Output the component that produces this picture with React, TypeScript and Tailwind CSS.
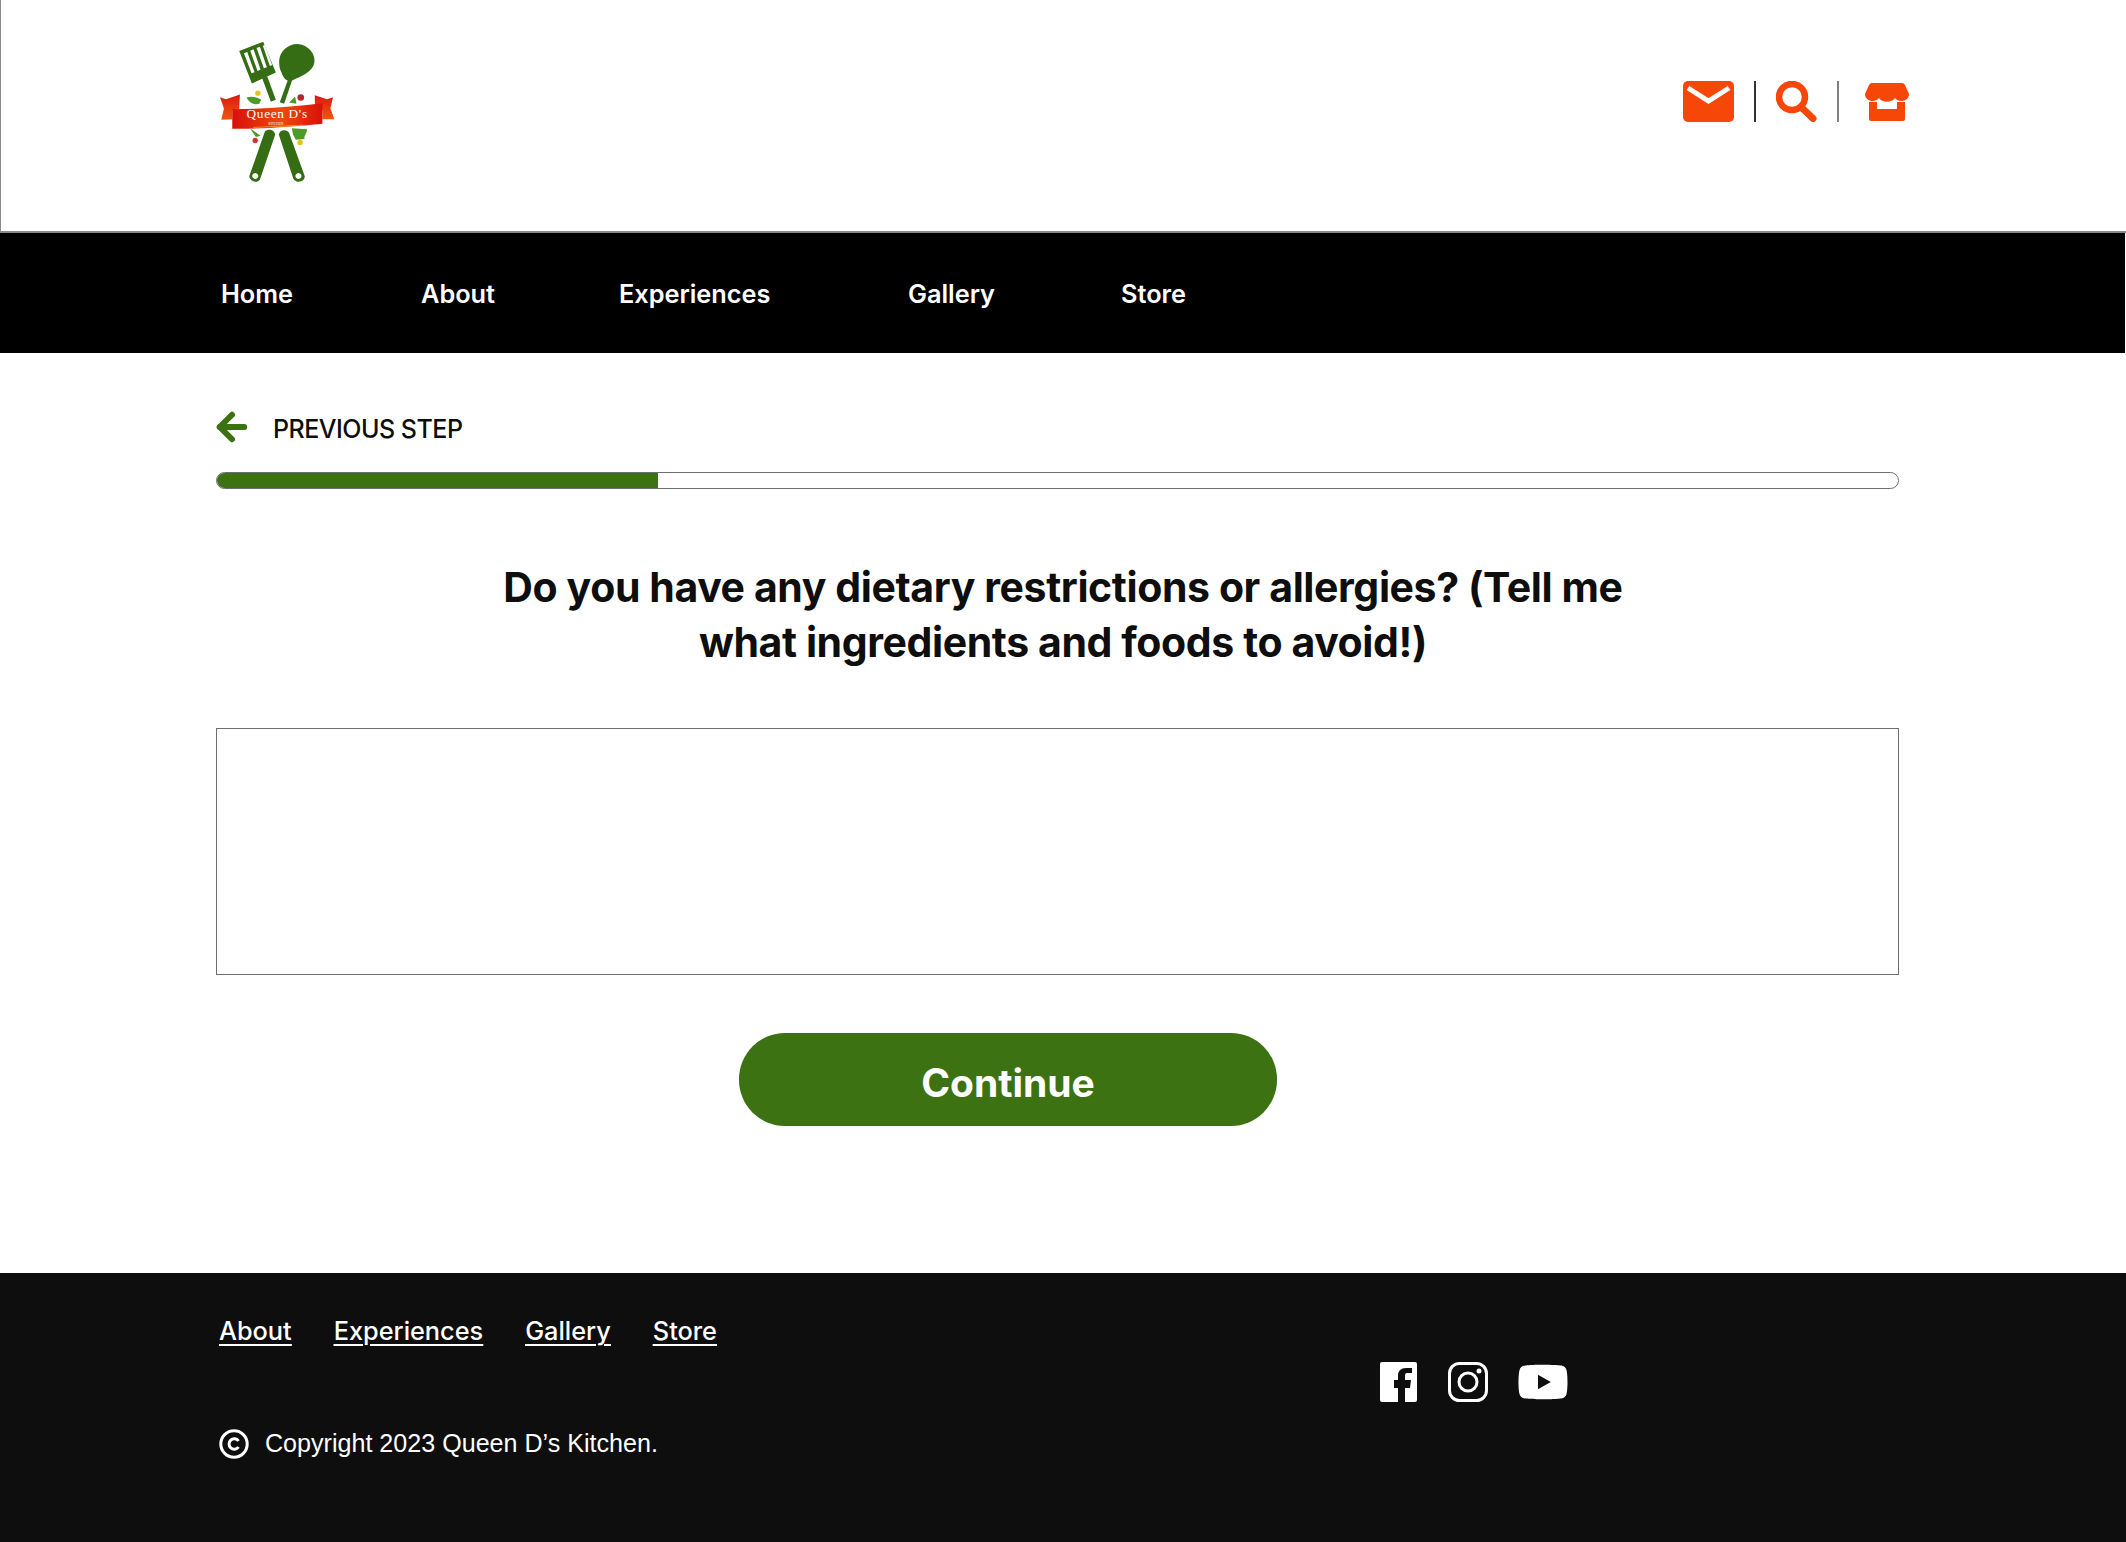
import React from 'react'
import { ArrowLeft } from 'lucide-react'
import { FaYoutube } from 'react-icons/fa6'

const navLinks = [
    { label: 'Home', width: 'w-[200px]' },
    { label: 'About', width: 'w-[198px]' },
    { label: 'Experiences', width: 'w-[289px]' },
    { label: 'Gallery', width: 'w-[213px]' },
    { label: 'Store', width: 'w-[100px]' },
]

const footerLinks = ['About', 'Experiences', 'Gallery', 'Store']

const Logo = () => (
    <svg viewBox="85 60 350 430" className="h-[143px] w-[117px]">
        <defs>
            <linearGradient id="banner" x1="0" x2="1" y1="0" y2="0">
                <stop offset="0" stopColor="#d8100c" />
                <stop offset="0.55" stopColor="#ee4a06" />
                <stop offset="1" stopColor="#d8100c" />
            </linearGradient>
            <linearGradient id="ribbon" x1="0" x2="0" y1="0" y2="1">
                <stop offset="0" stopColor="#d81a12" />
                <stop offset="1" stopColor="#f2560c" />
            </linearGradient>
        </defs>
        <g fill="#356d14">
            <path d="M148 93 L220 65 L258 158 L186 191 Z" />
            <path d="M217 175 L232 169 L258 240 L243 246 Z" />
            <path d="M268 125 C268 90 300 70 325 72 C355 75 378 100 374 128 C370 155 335 170 310 180 C295 188 282 178 276 160 C270 150 268 140 268 125 Z" />
            <path d="M296 175 L308 178 L283 252 L270 247 Z" />
            <path d="M225 335 C235 325 255 330 256 345 L210 480 C200 492 180 485 178 470 Z M196 460 a9 9 0 1 0 0.1 0 Z" fillRule="evenodd" />
            <path d="M267 345 C270 328 292 328 298 340 L345 470 C345 488 320 492 311 478 Z M326 460 a9 9 0 1 0 0.1 0 Z" fillRule="evenodd" />
        </g>
        <g fill="#fff">
            <path d="M162 100 L172 96 L194 157 L185 160 Z" />
            <path d="M181 92 L191 88 L212 149 L203 153 Z" />
            <path d="M200 84 L210 80 L231 142 L222 145 Z" />
            <path d="M219 77 L225 75 L247 135 L240 138 Z" />
        </g>
        <path d="M170 233 C185 228 205 232 214 240 L208 252 C195 256 178 250 170 233 Z M298 248 L316 230 L320 252 Z" fill="#4d9a26" />
        <path d="M306 325 L352 328 C350 345 340 350 345 358 L318 360 L310 345 Z M180 325 L212 348 L198 352 Z" fill="#4d9a26" />
        <circle cx="204" cy="220" r="8" fill="#e3c21c" />
        <circle cx="333" cy="233" r="10" fill="#b5252c" />
        <circle cx="196" cy="362" r="8" fill="#d9302a" />
        <circle cx="331" cy="368" r="8" fill="#e3c21c" />
        <path d="M90 232 L108 238 L150 224 L148 268 L127 272 L127 298 L94 300 L102 266 Z" fill="url(#ribbon)" />
        <path d="M430 232 L412 238 L375 226 L376 268 L398 272 L398 298 L434 298 L422 266 Z" fill="url(#ribbon)" />
        <path d="M127 268 C210 268 300 262 398 250 L398 312 C300 322 210 328 127 327 Z" fill="url(#banner)" />
        <text x="262" y="296" textAnchor="middle" fontFamily="'Liberation Serif', serif" fontSize="40" letterSpacing="2" fill="#fff">Queen D's</text>
        <text x="258" y="316" textAnchor="middle" fontFamily="'Liberation Serif', serif" fontSize="10" fill="#fff">KITCHEN</text>
        <path d="M190 323 L340 316" stroke="#f5b342" strokeWidth="2" />
    </svg>
)

const MailIcon = () => (
    <svg viewBox="0 0 51 41" className="h-[41px] w-[51px]">
        <rect width="51" height="41" rx="5" fill="#f74708" />
        <path d="M5 7 L25.5 20 L46 7" fill="none" stroke="#fff" strokeWidth="5" />
    </svg>
)

const SearchIcon = () => (
    <svg viewBox="0 0 41 41" className="h-[41px] w-[41px]">
        <circle cx="16" cy="16" r="13" fill="none" stroke="#f74708" strokeWidth="6.5" />
        <path d="M25 26 L37 37.5" fill="none" stroke="#f74708" strokeWidth="7" strokeLinecap="round" />
    </svg>
)

const StoreIcon = () => (
    <svg viewBox="0 0 44 38" className="h-[38px] w-[44px]">
        <path d="M7 0 H37 Q39 0 40 2 L44 11 C44 19 33 20 30 15 C27 20 17 20 14 15 C11 20 0 19 0 11 L4 2 Q5 0 7 0 Z" fill="#f74708" />
        <path d="M4 19 H12 V26 H32 V19 H40 V36 Q40 38 38 38 H6 Q4 38 4 36 Z" fill="#f74708" />
    </svg>
)

const FacebookIcon = () => (
    <svg viewBox="0 0 37 40" className="h-[40px] w-[37px]">
        <path
            fillRule="evenodd"
            fill="#fff"
            d="M2 0 H35 Q37 0 37 2 V38 Q37 40 35 40 H25 V26 H30 L31 18 H25 V13 Q25 11 27 11 H32 V6 H26 Q18 6 18 14 V18 H14 V26 H18 V40 H2 Q0 40 0 38 V2 Q0 0 2 0 Z"
        />
    </svg>
)

const InstagramIcon = () => (
    <svg viewBox="0 0 40 40" className="h-[40px] w-[40px]" fill="none" stroke="#fff" strokeWidth="3">
        <rect x="1.5" y="1.5" width="37" height="37" rx="10" />
        <circle cx="20" cy="20" r="9" />
        <circle cx="31" cy="9" r="2.5" fill="#fff" stroke="none" />
    </svg>
)

const CopyrightIcon = () => (
    <svg viewBox="0 0 30 30" className="h-[30px] w-[30px]">
        <circle cx="15" cy="15" r="13.2" fill="none" stroke="#fff" strokeWidth="3" />
        <path d="M19.5 12 A5.2 5.2 0 1 0 19.5 18" fill="none" stroke="#fff" strokeWidth="3" />
    </svg>
)

const App = () => {
    return (
        <div className="flex min-h-[1542px] flex-col bg-white font-['Inter',sans-serif]">
            <header className="flex h-[233px] items-start justify-between border-b-2 border-l border-[#8a8a8a] pl-[217px] pr-[217px]">
                <div className="pt-[40px]">
                    <Logo />
                </div>
                <div className="mt-[81px] flex items-center">
                    <MailIcon />
                    <div className="ml-[20px] h-[41px] w-[2px] bg-[#333333]" />
                    <div className="ml-[20px]"><SearchIcon /></div>
                    <div className="ml-[20px] h-[41px] w-[2px] bg-[#808080]" />
                    <div className="ml-[26px]"><StoreIcon /></div>
                </div>
            </header>

            <nav className="mr-px flex h-[120px] items-center bg-black pt-[2px] pl-[221px]">
                {navLinks.map((link) => (
                    <a key={link.label} className={`${link.width} text-[25.3px] font-semibold text-white`}>
                        {link.label}
                    </a>
                ))}
            </nav>

            <main className="flex flex-1 flex-col px-[216px]">
                <div className="mt-[58px] flex h-[32px] items-center">
                    <ArrowLeft className="ml-[-5px] h-[42px] w-[42px] text-[#3d7212]" strokeWidth={3.4} />
                    <span className="mt-[6px] ml-[20px] text-[25px] font-medium tracking-[-0.5px] text-[#0e0e0e]">PREVIOUS STEP</span>
                </div>
                <div className="mt-[29px] h-[17px] w-[1683px] overflow-hidden rounded-full border border-[#6e6e6e]">
                    <div className="h-full w-[441px] bg-[#3d7212]" />
                </div>
                <h1 className="mx-auto mt-[71px] w-[1200px] text-center text-[41px] leading-[55px] font-bold tracking-[-0.4px] text-[#0e0e0e]">
                    Do you have any dietary restrictions or allergies? (Tell me<br />what ingredients and foods to avoid!)
                </h1>
                <textarea className="mt-[58px] h-[247px] w-[1683px] resize-none border border-[#6e6e6e] bg-white" />
                <button className="mt-[58px] ml-[523px] flex h-[93px] w-[538px] items-center justify-center rounded-[46px] bg-[#3d7212] pt-[8px] text-[39px] font-bold text-white">
                    Continue
                </button>
            </main>

            <footer className="flex h-[269px] bg-[#0e0e0e] pl-[219px] text-white">
                <div className="w-[1161px]">
                    <div className="mt-[39px] flex gap-[42px] text-[25.3px] font-medium underline decoration-2 underline-offset-4">
                        {footerLinks.map((link) => (
                            <a key={link}>{link}</a>
                        ))}
                    </div>
                    <div className="mt-[75px] flex items-center gap-[16px] font-['Liberation_Sans',sans-serif] text-[25.1px]">
                        <CopyrightIcon />
                        <span>Copyright 2023 Queen D’s Kitchen.</span>
                    </div>
                </div>
                <div className="mt-[89px] flex h-[40px] items-center">
                    <FacebookIcon />
                    <div className="ml-[31px]"><InstagramIcon /></div>
                    <FaYoutube className="ml-[29px] h-[46px] w-[52px] text-white" />
                </div>
            </footer>
        </div>
    )
}

export default App
